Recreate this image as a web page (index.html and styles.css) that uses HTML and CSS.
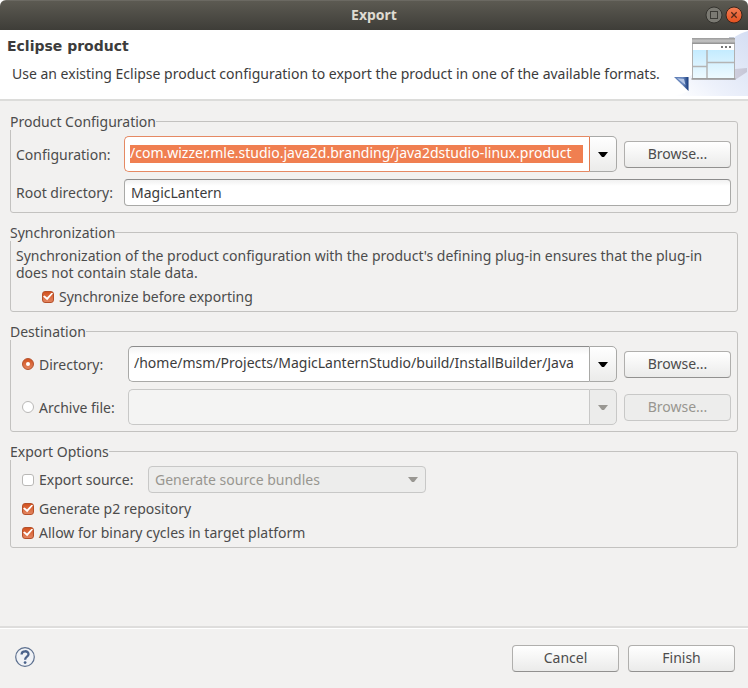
FILE: index.html
```html
<!DOCTYPE html>
<html lang="en">
<head>
<meta charset="utf-8">
<meta name="viewport" content="width=device-width, initial-scale=1">
<title>Export</title>
<link rel="stylesheet" href="styles.css">
</head>
<body>
<div class="dialog">
  <div class="titlebar">
    <span class="titlebar-text">Export</span>
    <div class="window-controls">
      <button type="button" class="window-button" aria-label="Maximize">
        <svg viewBox="0 0 18 18" width="18" height="18"><circle cx="9" cy="9" r="8" fill="#7b7a73" stroke="#34332e"/><rect x="5.500" y="5.500" width="7" height="7" fill="none" stroke="#3b3a35"/></svg>
      </button>
      <button type="button" class="window-button" aria-label="Close">
        <svg viewBox="0 0 18 18" width="18" height="18"><defs><linearGradient id="close-fill" x2="0" y2="1"><stop stop-color="#f37e55"/><stop offset="1" stop-color="#e4501e"/></linearGradient></defs><circle cx="9" cy="9" r="8" fill="url(#close-fill)" stroke="#38261e"/><path d="M6.300 6.300l5.400 5.400M11.700 6.300l-5.400 5.400" stroke="#54291a" stroke-width="1.300"/></svg>
      </button>
    </div>
  </div>

  <header class="banner">
    <div class="banner-text">
      <h1>Eclipse product</h1>
      <p>Use an existing Eclipse product configuration to export the product in one of the available formats.</p>
    </div>
    <svg class="banner-art" viewBox="0 0 75 66" width="75" height="66" aria-hidden="true">
      <defs>
        <linearGradient id="glow" x1="0" y1="1" x2="1" y2="0"><stop stop-color="#fff"/><stop offset=".35" stop-color="#edf1fb"/><stop offset="1" stop-color="#d5def3"/></linearGradient>
        <linearGradient id="pane" x2="0" y2="1"><stop stop-color="#c4ebff"/><stop offset="1" stop-color="#eefaff"/></linearGradient>
        <linearGradient id="bar" x2="0" y2="1"><stop stop-color="#999"/><stop offset=".5" stop-color="#c6c6c6"/><stop offset="1" stop-color="#8d8d8d"/></linearGradient>
        <linearGradient id="fold" x2="1" y2="0"><stop stop-color="#5c7cb4"/><stop offset=".6" stop-color="#6c8abf"/><stop offset="1" stop-color="#173b7c"/></linearGradient>
        <linearGradient id="shadow" x2="1" y2="0"><stop stop-color="#e9ebf4"/><stop offset="1" stop-color="#c6c6d6"/></linearGradient>
      </defs>
      <path d="M75 1C64 4 60 8 53 15L15 48V61C10 64 5 65 0 66H75Z" fill="url(#glow)"/>
      <path d="M62 39L74 38V42L62 50H24Z" fill="url(#shadow)"/>
      <path d="M1 47H15.500V61Z" fill="url(#fold)"/>
      <path d="M4 48.200L11 49L12.500 55Z" fill="#b4c6e6"/>
      <rect x="19.500" y="8.500" width="42" height="40" fill="#fff" stroke="#b0b0b0"/>
      <rect x="19" y="8" width="43" height="6" fill="url(#bar)"/>
      <path d="M56 7.500h5" stroke="#c3c8d3"/>
      <rect x="20" y="20" width="41" height="28" fill="url(#pane)"/>
      <path d="M34 20V48M34 32.500H61M20 36.500H34" stroke="#b4b4b4" stroke-width="1.500"/>
      <path d="M48 17h2M52 17h2M56 17h2" stroke="#777" stroke-width="2"/>
      <path d="M18.500 49H62.500" stroke="#999" stroke-width="1.500"/>
    </svg>
  </header>

  <form class="page">
    <fieldset class="group">
      <legend>Product Configuration</legend>
      <div class="fields fields-product">
        <label for="configuration">Configuration:</label>
        <div class="combo combo-focus">
          <input id="configuration" class="selected" type="text" value="/com.wizzer.mle.studio.java2d.branding/java2dstudio-linux.product">
          <button type="button" class="combo-toggle" aria-label="Show configurations"><svg viewBox="0 0 10 5" width="10" height="5"><path d="M0 0H10L6 5H4Z"/></svg></button>
        </div>
        <button type="button" class="button">Browse...</button>
        <label for="root">Root directory:</label>
        <input id="root" class="entry" type="text" value="MagicLantern">
      </div>
    </fieldset>

    <fieldset class="group">
      <legend>Synchronization</legend>
      <p class="hint">Synchronization of the product configuration with the product's defining plug-in ensures that the plug-in does not contain stale data.</p>
      <label class="option option-indented"><input type="checkbox" checked>Synchronize before exporting</label>
    </fieldset>

    <fieldset class="group">
      <legend>Destination</legend>
      <div class="fields fields-destination">
        <label class="option"><input type="radio" name="destination" checked>Directory:</label>
        <div class="combo">
          <input type="text" aria-label="Directory path" value="/home/msm/Projects/MagicLanternStudio/build/InstallBuilder/Java">
          <button type="button" class="combo-toggle" aria-label="Show directories"><svg viewBox="0 0 10 5" width="10" height="5"><path d="M0 0H10L6 5H4Z"/></svg></button>
        </div>
        <button type="button" class="button">Browse...</button>
        <label class="option"><input type="radio" name="destination">Archive file:</label>
        <div class="combo combo-disabled">
          <input type="text" aria-label="Archive file path" disabled>
          <button type="button" class="combo-toggle" aria-label="Show archive files" disabled><svg viewBox="0 0 10 5" width="10" height="5"><path d="M0 0H10L6 5H4Z"/></svg></button>
        </div>
        <button type="button" class="button" disabled>Browse...</button>
      </div>
    </fieldset>

    <fieldset class="group">
      <legend>Export Options</legend>
      <div class="source-row">
        <label class="option"><input type="checkbox">Export source:</label>
        <div class="select-wrap">
          <select aria-label="Source bundles" disabled><option>Generate source bundles</option></select>
          <svg viewBox="0 0 10 5" width="10" height="5"><path d="M0 0H10L6 5H4Z"/></svg>
        </div>
      </div>
      <label class="option"><input type="checkbox" checked>Generate p2 repository</label>
      <label class="option"><input type="checkbox" checked>Allow for binary cycles in target platform</label>
    </fieldset>
  </form>

  <footer class="footer">
    <button type="button" class="help" aria-label="Help">
      <svg viewBox="0 0 20 20" width="20" height="20"><circle cx="10" cy="10" r="9.300" fill="#f0f2f6" stroke="#5d708f" stroke-width="1.200"/><path d="M6.600 7.400C6.600 3.300 13.600 3.200 13.500 7.300C13.400 9.800 10.100 9.600 10.100 12.800" fill="none" stroke="#4b628a" stroke-width="2.300"/><circle cx="10.100" cy="15.600" r="1.400" fill="#4b628a"/></svg>
    </button>
    <button type="button" class="button">Cancel</button>
    <button type="submit" class="button">Finish</button>
  </footer>
</div>
</body>
</html>
```
FILE: styles.css
```css
* { box-sizing: border-box; }

body {
  margin: 0;
  background: #fff;
  color: #4c4c4c;
  font: 14px/17px "Noto Sans", sans-serif;
}

input, button, select { font: inherit; color: inherit; }
input { line-height: 20px; }

.dialog {
  display: flex;
  flex-direction: column;
  min-height: 100vh;
  background: #f2f1f0;
  border-radius: 6px 6px 0 0;
  overflow: hidden;
}

.titlebar {
  display: grid;
  grid-template-columns: 1fr auto 1fr;
  align-items: center;
  height: 30px;
  padding: 0 5px 2px;
  background: linear-gradient(#5c5a52, #3e3d38);
  border-top: 1px solid #6b6962;
  color: #dfdbd2;
  font-weight: bold;
}
.titlebar-text { grid-column: 2; }
.window-controls { display: flex; justify-content: flex-end; gap: 2px; }
.window-button, .help { display: block; padding: 0; border: 0; background: none; }
.window-button svg, .help svg { display: block; }

.banner {
  display: flex;
  justify-content: space-between;
  height: 71px;
  background: #fff;
  border-bottom: 2px solid #dcdcda;
  color: #3c3c3c;
}
.banner-text { flex: 1; width: 0; padding: 8px 0 0 7px; white-space: nowrap; }
.banner-art { flex: none; }
.banner h1 { margin: 0 0 10px; font: bold 14px/17px "DejaVu Sans", sans-serif; }
.banner p { margin: 0 0 0 5px; }

.page {
  display: flex;
  flex: 1;
  flex-direction: column;
  gap: 11px;
  padding: 12px 10px;
}

.group {
  display: flex;
  flex-direction: column;
  gap: 7px;
  min-width: 0;
  margin: 0;
  padding: 6px 6px 6px 5px;
  border: 1px solid #c3c2c0;
  border-radius: 3px;
}
.group legend { margin-left: -6px; padding: 0; }

.fields { display: grid; gap: 7px; align-items: center; }
.fields-product { grid-template-columns: 101px 1fr 107px; }
.fields-destination { grid-template-columns: 105px 1fr 107px; }

.entry {
  grid-column: 2 / -1;
  width: 100%;
  height: 27px;
  padding: 0 6px;
  border: 1px solid #a9a9a7;
  border-top-color: #8c8c8c;
  border-radius: 4px;
  background: linear-gradient(#f1f1f1, #fff 6px);
  color: #3c3c3c;
}

.combo { display: flex; height: 36px; min-width: 0; }
.combo input {
  flex: 1;
  min-width: 0;
  padding: 0 6px 2px 5px;
  border: 1px solid #a9a9a7;
  border-top-color: #8c8c8c;
  border-right: 0;
  border-radius: 5px 0 0 5px;
  background: linear-gradient(#f3f3f3, #fff 8px);
  color: #3c3c3c;
}
.combo-toggle {
  display: flex;
  align-items: center;
  justify-content: center;
  width: 28px;
  padding: 0;
  border: 1px solid #a9a9a7;
  border-radius: 0 5px 5px 0;
  background: linear-gradient(#fff, #ebebea);
  fill: #000;
}
.combo-focus input { border-color: #e58963; }
.combo-focus .combo-toggle { border-left-color: #e07b50; }
.combo .selected {
  background: linear-gradient(#f07f51, #f07f51) 5px 50% / calc(100% - 11px) 18px no-repeat, #fff;
  color: #fff;
}
.combo-disabled input { background: #f4f4f3; border-color: #c8c8c7; }
.combo-disabled .combo-toggle { background: #ececeb; border-color: #c8c8c7; fill: #999792; }

.button {
  width: 107px;
  height: 27px;
  padding: 0 0 2px;
  border: 1px solid #b0afad;
  border-bottom-color: #929190;
  border-radius: 4px;
  background: linear-gradient(#fff, #ebebea);
}
.button:disabled { background: #ededec; border-color: #c8c8c7; color: #989690; }

.hint { margin: 0; }

.option { display: flex; align-items: center; gap: 5px; padding-left: 6px; white-space: nowrap; }
.option-indented { padding-left: 26px; }
.option input {
  display: grid;
  flex: none;
  place-content: center;
  appearance: none;
  width: 12px;
  height: 12px;
  margin: 0;
  border: 1px solid #b9b8b6;
  border-radius: 3px;
  background: #fff;
}
.option input[type="radio"] { border-radius: 50%; }
.option input:checked { border-color: #b5502a; background: linear-gradient(#d2521f, #e38560); }
.option input[type="checkbox"]:checked::before {
  content: "";
  width: 10px;
  height: 8px;
  background: #fff;
  clip-path: polygon(0 50%, 16% 36%, 40% 62%, 88% 0, 100% 12%, 42% 98%);
}
.option input[type="radio"]:checked::before {
  content: "";
  width: 4px;
  height: 4px;
  border-radius: 50%;
  background: #fff;
}

.source-row { display: grid; grid-template-columns: 121px 278px; align-items: center; gap: 11px; }
.select-wrap { position: relative; }
.select-wrap select {
  display: block;
  appearance: none;
  width: 100%;
  height: 27px;
  padding: 0 24px 0 6px;
  border: 1px solid #c8c8c7;
  border-radius: 4px;
  background: #ededec;
  color: #989690;
  opacity: 1;
}
.select-wrap svg { position: absolute; top: 11px; right: 8px; fill: #999792; pointer-events: none; }

.footer {
  display: flex;
  gap: 9px;
  padding: 17px 13px 16px 15px;
  border-top: 2px solid #dedddc;
  box-shadow: inset 0 1px #fff;
}
.help { margin: 2px auto 0 0; height: 20px; }
```
